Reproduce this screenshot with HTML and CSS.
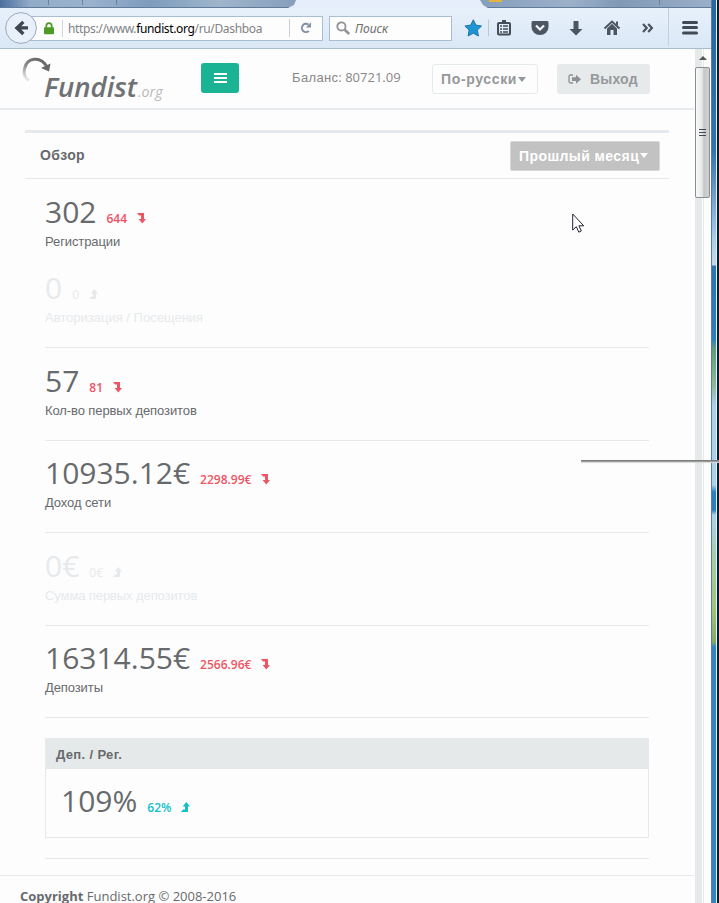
FILE: index.html
```
<!DOCTYPE html>
<html lang="ru">
<head>
<meta charset="utf-8">
<title>Fundist.org</title>
<link rel="stylesheet" href="styles.css">
</head>
<body>
<svg class="defs" aria-hidden="true">
  <symbol id="down" viewBox="0 0 9 11"><path d="M0 0h7v6h2L5.3 10.5 1.6 6H4V2.500H2z"/></symbol>
  <symbol id="up" viewBox="0 0 9 11"><path d="M0 10h7V4.500h2L5.300 0 1.600 4.500H4v3H2z"/></symbol>
</svg>
<div class="screen">
<div class="window">
  <div class="tabs"><span class="tab-active"></span><i class="tick t1"></i><i class="tick t2"></i><i class="tick t3"></i><i class="tick t4"></i><i class="favicon"></i></div>
  <header class="toolbar">
    <div class="back"><svg width="32" height="32" viewBox="0 0 32 32"><circle cx="16" cy="16" r="15.4" fill="#e9f0f9" stroke="#98abc0"/><path d="M17.2 8.800 9.500 16l7.700 7.200 2.300-2.400-3.200-3.200H23v-3.400h-6.700l3.200-3.100z" fill="#3d4651"/></svg></div>
    <div class="address">
      <svg class="lock" width="10" height="13"><path d="M2.300 6V4a2.700 2.900 0 0 1 5.400 0v2" fill="none" stroke="#4d9a26" stroke-width="1.700"/><rect y="5.300" width="10" height="7" rx="1" fill="#4d9a26"/></svg>
      <span class="url">https://www.<b>fundist.org</b>/ru/Dashboa</span>
      <span class="reload"><svg width="12" height="12" viewBox="0 0 12 12"><path d="M8.800 8.900A4.100 4.100 0 1 1 8.400 2.600" fill="none" stroke="#8290a3" stroke-width="2"/><path d="M11 .3v5.300H5.800z" fill="#8290a3"/></svg></span>
    </div>
    <div class="search"><svg width="15" height="15" viewBox="0 0 15 15" fill="none" stroke="#919396"><circle cx="5.400" cy="5.400" r="4.100" stroke-width="1.800"/><path d="m8.700 8.700 4.500 4.300" stroke-width="2.700"/></svg><span>Поиск</span></div>
    <svg class="tools" width="243" height="40" viewBox="0 0 243 40">
      <path d="m9.300 11.800 2.600 5.300 5.600.9-4.100 4.100 1 5.900-5.100-2.800-5.200 2.800 1-5.900-4.200-4.100 5.800-.9z" fill="#1b95d4" stroke="#2274aa"/>
      <path d="M24.500 11.500v17" stroke="#bdc8d5"/>
      <g fill="none" stroke="#434c57"><rect x="34" y="15" width="12" height="11.500" rx="1" stroke-width="2"/><path d="M38 13.500h4" stroke-width="3"/><path d="M36 18h2m1 0h5m-8 3h2m1 0h5m-8 3h2m1 0h5" stroke-width="1.300"/></g>
      <path d="M68.500 13h15l1 1v5a8.500 8 0 0 1-17 0v-5z" fill="#4c5663"/><path d="m72 17.500 4 4 4-4" fill="none" stroke="#f0f5fb" stroke-width="2.200"/>
      <path d="M109.500 13h5v8h4l-6.500 6.500-6.500-6.500h4z" fill="#4c5663"/>
      <path d="m140.500 20.500 7.500-7 7.500 7" fill="none" stroke="#4c5663" stroke-width="2"/><path d="M152 13.500h2v4l-2-1zM143 20.500l5-4.700 5 4.700V27h-3.500v-5h-3v5H143z" fill="#4c5663"/>
      <path d="m179 16 3.700 4-3.700 4m5.200-8 3.700 4-3.700 4" fill="none" stroke="#4a535f" stroke-width="2.200"/>
      <path d="M204.500 0v38" stroke="#c3cfdd"/>
      <path d="M219.500 14.500h13m-13 5h13m-13 5.500h13" stroke="#414952" stroke-width="3" stroke-linecap="round"/>
    </svg>
  </header>
  <div class="viewport">
    <div class="page">
      <nav class="navbar">
        <svg class="logo" width="150" height="52" viewBox="0 0 150 52">
          <defs><linearGradient id="fade" x1="0" y1="1" x2=".7" y2="0"><stop offset="0" stop-color="#fdfdfd"/><stop offset=".5" stop-color="#8c8c8e"/><stop offset="1" stop-color="#67676a"/></linearGradient></defs>
          <path d="M7.500 25A12 12 0 0 1 3.800 12C6 1.800 19-.5 25.500 10" fill="none" stroke="url(#fade)" stroke-width="3"/><path d="m29.500 7.500-1.500 8-8-3.500z" fill="#68686b"/>
          <text class="brand" x="23" y="41" textLength="93" lengthAdjust="spacingAndGlyphs">Fundist</text>
          <text class="brand-tld" x="117" y="41" textLength="24.500" lengthAdjust="spacingAndGlyphs">.org</text>
        </svg>
        <button class="menu"><i></i><i></i><i></i></button>
        <span class="balance"><span>Баланс</span>: 80721.09</span>
        <button class="btn lang"><span>По-русски</span><i class="caret"></i></button>
        <button class="btn exit"><svg width="13" height="11" viewBox="0 0 13 11"><path d="M5 1H2.500Q1 1 1 2.500v5Q1 9 2.500 9H5" fill="none" stroke="#8d9094" stroke-width="1.300"/><path d="M4 3.300h4V.7L13 5.200 8 9.700V7H4z" fill="#8d9094"/></svg><span>Выход</span></button>
      </nav>
      <main class="panel">
        <div class="panel-head"><h1>Обзор</h1><button class="period"><span>Прошлый месяц</span><i class="caret"></i></button></div>
        <div class="stats">
          <section class="stat first"><div class="value">302<small class="bad">644<svg><use href="#down"/></svg></small></div><p>Регистрации</p></section>
          <section class="stat second muted"><div class="value">0<small>0<svg><use href="#up"/></svg></small></div><p class="visits">Авторизация / Посещения</p></section>
          <section class="stat tall"><div class="value">57<small class="bad">81<svg><use href="#down"/></svg></small></div><p class="first-deposits">Кол-во первых депозитов</p></section>
          <section class="stat"><div class="value">10935.12€<small class="bad">2298.99€<svg><use href="#down"/></svg></small></div><p>Доход сети</p></section>
          <section class="stat tall muted"><div class="value">0€<small>0€<svg><use href="#up"/></svg></small></div><p>Сумма первых депозитов</p></section>
          <section class="stat"><div class="value">16314.55€<small class="bad">2566.96€<svg><use href="#down"/></svg></small></div><p>Депозиты</p></section>
          <section class="ratio"><h2>Деп. / Рег.</h2><div class="value">109%<small class="good">62%<svg><use href="#up"/></svg></small></div></section>
        </div>
      </main>
      <footer><b>Copyright</b> Fundist.org © 2008-2016</footer>
    </div>
    <div class="scrollbar"><span class="arrow"></span><div class="thumb"><i></i><i></i><i></i></div></div>
  </div>
</div>
<div class="edge"></div>
</div>
<div class="streak"></div>
<svg class="cursor" width="13" height="21" viewBox="0 0 13 21"><path d="M.7 1v16l3.600-3.300 2.500 5.500 2.500-1.200-2.400-5.200h4.800z" fill="#fff" stroke="#20242f"/></svg>
</body>
</html>
```
FILE: styles.css
```
* { box-sizing: border-box; }
body { margin: 0; width: 719px; height: 903px; overflow: hidden; position: relative; background: #fdfdfd; color: #676a6c; font: 13px "Open Sans", sans-serif; }
h1, h2, p { margin: 0; }
button { border: 0; padding: 0; margin: 0; }
.defs { position: absolute; width: 0; height: 0; }
.screen { display: flex; height: 903px; }
.window { width: 711px; flex: none; }

.tabs { height: 8px; position: relative; background: linear-gradient(90deg, #4c6f9f, #91acc8 30px, #9bb2cf 90px, #7e9cbd 150px, #9fb5cc 220px, #879fbc 295px, #879fbc 485px, #9cb0ca 570px, #8199b6 620px, #9aafc9); border-bottom: 1px solid #617b9a; }
.tab-active { position: absolute; left: 288px; top: 0; width: 200px; height: 8px; background: #e5eefa; clip-path: polygon(8px 0, 192px 0, 195px 5px, 200px 8px, 0 8px, 6px 5px); }
.tick { position: absolute; top: 0; width: 1px; height: 5px; background: #6e7f96; }
.t1 { left: 48px; } .t2 { left: 82px; } .t3 { left: 116px; } .t4 { left: 659px; }
.favicon { position: absolute; left: 489px; top: 0; width: 13px; height: 2px; background: #e2b63b; }

.toolbar { height: 41px; display: flex; align-items: center; background: linear-gradient(#e7f1fc, #dae7f5); border-bottom: 1px solid #a9bdd1; position: relative; }
.back { width: 32px; height: 32px; margin-left: 5px; flex: none; z-index: 1; }
.address { width: 299px; height: 25px; margin-left: -13px; padding-left: 19px; flex: none; display: flex; align-items: center; background: #fdfdfd; border: 1px solid #a9bdd3; }
.url { flex: 1; height: 17px; margin-left: 8px; padding-left: 5px; border-left: 1px solid #d3d6da; font: 12px/18px "Noto Sans", sans-serif; color: #808285; white-space: nowrap; letter-spacing: -.35px; }
.url b { font-weight: 400; color: #000; }
.reload { width: 33px; height: 18px; padding: 3px 0 0 10px; border-left: 1px solid #c9d0d8; }
.reload svg { display: block; }
.search { width: 123px; height: 25px; margin-left: 6px; padding-left: 6px; flex: none; display: flex; align-items: center; gap: 4px; background: #fdfdfd; border: 1px solid #a9bdd3; font: italic 12px "Noto Sans", sans-serif; color: #6d6d6d; }
.search span { padding-top: 1px; }
.tools { margin-left: 12px; flex: none; }

.viewport { display: flex; height: 854px; }
.page { width: 695px; flex: none; }
.navbar { height: 61px; display: flex; align-items: flex-start; border-bottom: 2px solid #e7eaec; width: 694px; }
.logo { margin: 7px 0 0 21px; flex: none; }
.brand { font: italic 600 27px "Open Sans", sans-serif; fill: #707174; }
.brand-tld { font: italic 15px "Open Sans", sans-serif; fill: #b8b8ba; }
.menu { width: 38px; height: 30px; margin: 14px 0 0 30px; flex: none; border-radius: 3px; background: #1ab394; display: flex; flex-direction: column; align-items: center; justify-content: center; gap: 2px; }
.menu i { width: 13px; height: 2px; background: #fff; }
.balance { width: 140px; margin: 19px 0 0 53px; flex: none; font: 13px/18px "Open Sans", sans-serif; color: #888; white-space: nowrap; }
.balance span { font-family: "Liberation Sans", sans-serif; letter-spacing: .35px; }
.btn { height: 30px; margin-top: 15px; flex: none; display: flex; align-items: center; border-radius: 3px; font: 700 14px "Liberation Sans", sans-serif; color: #96989b; white-space: nowrap; }
.lang { width: 106px; padding-left: 8px; border: 1px solid #e5eaea; background: #fdfdfd; letter-spacing: .65px; }
.caret { width: 0; height: 0; border: 4px solid transparent; border-top: 5px solid currentColor; border-bottom: 0; margin-left: 1px; }
.exit { width: 93px; margin-left: 19px; padding-left: 11px; gap: 9px; background: #e7eaeb; letter-spacing: .2px; }

.panel { width: 644px; margin: 20px 0 0 25px; border-top: 3px solid #e7eaec; }
.panel-head { height: 46px; padding: 0 9px 0 15px; display: flex; align-items: center; justify-content: space-between; border-bottom: 1px solid #e7eaec; }
h1 { font: 700 14px "Liberation Sans", sans-serif; letter-spacing: .4px; padding-bottom: 2px; }
.period { width: 150px; height: 30px; display: flex; align-items: center; padding-left: 8px; border: 1px solid #d7d8d8; border-radius: 2px; background: #c2c2c2; color: #fff; font: 700 14px "Liberation Sans", sans-serif; letter-spacing: .42px; white-space: nowrap; }
.stats { margin: 0 20px; border-bottom: 1px solid #e7eaec; height: 680px; }
.stat { height: 92px; padding-top: 15px; border-bottom: 1px solid #e7eaec; }
.stat.tall { height: 93px; padding-top: 16px; }
.stat.first { height: 76px; padding-top: 16px; border: 0; }
.stat.second { height: 93px; padding-top: 16px; }
.value { height: 38px; font: 30px/33px "Open Sans", sans-serif; white-space: nowrap; }
.value small { font-size: 12px; font-weight: 600; margin-left: 10px; }
.muted .value small { font-weight: 400; }
.value svg { width: 9px; height: 11px; margin-left: 10px; vertical-align: -1px; fill: currentColor; }
.bad { color: #ed5565; }
.good { color: #12bfcb; }
.muted { color: #e7eaec; }
.stat p { font: 13px/18px "Liberation Sans", sans-serif; letter-spacing: -.1px; }
.stat .visits { letter-spacing: 0; }
.ratio { margin-top: 20px; height: 100px; border: 1px solid #e7eaec; }
.ratio h2 { height: 30px; padding-left: 10px; background: #e5e9ea; font: 700 13px/31px "Liberation Sans", sans-serif; letter-spacing: .35px; }
.ratio .value { padding: 15px 0 0 15px; }
footer { width: 694px; margin-top: 16px; padding: 10px 20px 0; border-top: 1px solid #e7eaec; line-height: 20px; }

.scrollbar { width: 16px; background: linear-gradient(90deg, #e6e9e9 7px, #fdfdfd 7px, #fdfdfd 8px, #e6e9e9 8px, #e6e9e9 9px, #fdfdfd 9px); }
.arrow { display: block; width: 0; margin: 7px 0 0 4px; border: 4px solid transparent; border-top: 0; border-bottom: 4px solid #555; }
.thumb { width: 15px; height: 131px; margin-top: 7px; border: 1px solid #8b8e91; border-radius: 2px; background: linear-gradient(90deg, #fafafa, #e6e8e8 6px, #c4c6c9 8px, #cfd1d3); display: flex; flex-direction: column; align-items: center; justify-content: center; gap: 2px; }
.thumb i { width: 7px; height: 1px; background: #46494d; }
.edge { width: 8px; border-left: 1px solid #607d9c; background: linear-gradient(90deg, transparent 4px, #e8f0f5 4px, #e8f0f5 5px, #071d30 5px), linear-gradient(#2867a0, #2f74b2 150px, #7ba2ce 200px, #a8cfed 240px, #c7d6e8 265px, #2c75b0 266px, #2c80bd 339px, #609b79 348px, #8cba98 385px, #a9cfeb 405px, #a9d1ee 485px, #2c80bf 492px, #2c80bf 510px, #a9d1ee 515px, #a4cfa5 560px, #a0c477 610px, #84a965 642px, #2e86c4 647px, #2e86c4); }
.streak { position: absolute; left: 581px; top: 460px; width: 138px; height: 2px; background: linear-gradient(#6e6e6e, #aaa); box-shadow: 0 1px 1px #d7d9d9; }
.cursor { position: absolute; left: 572px; top: 213px; }
```
